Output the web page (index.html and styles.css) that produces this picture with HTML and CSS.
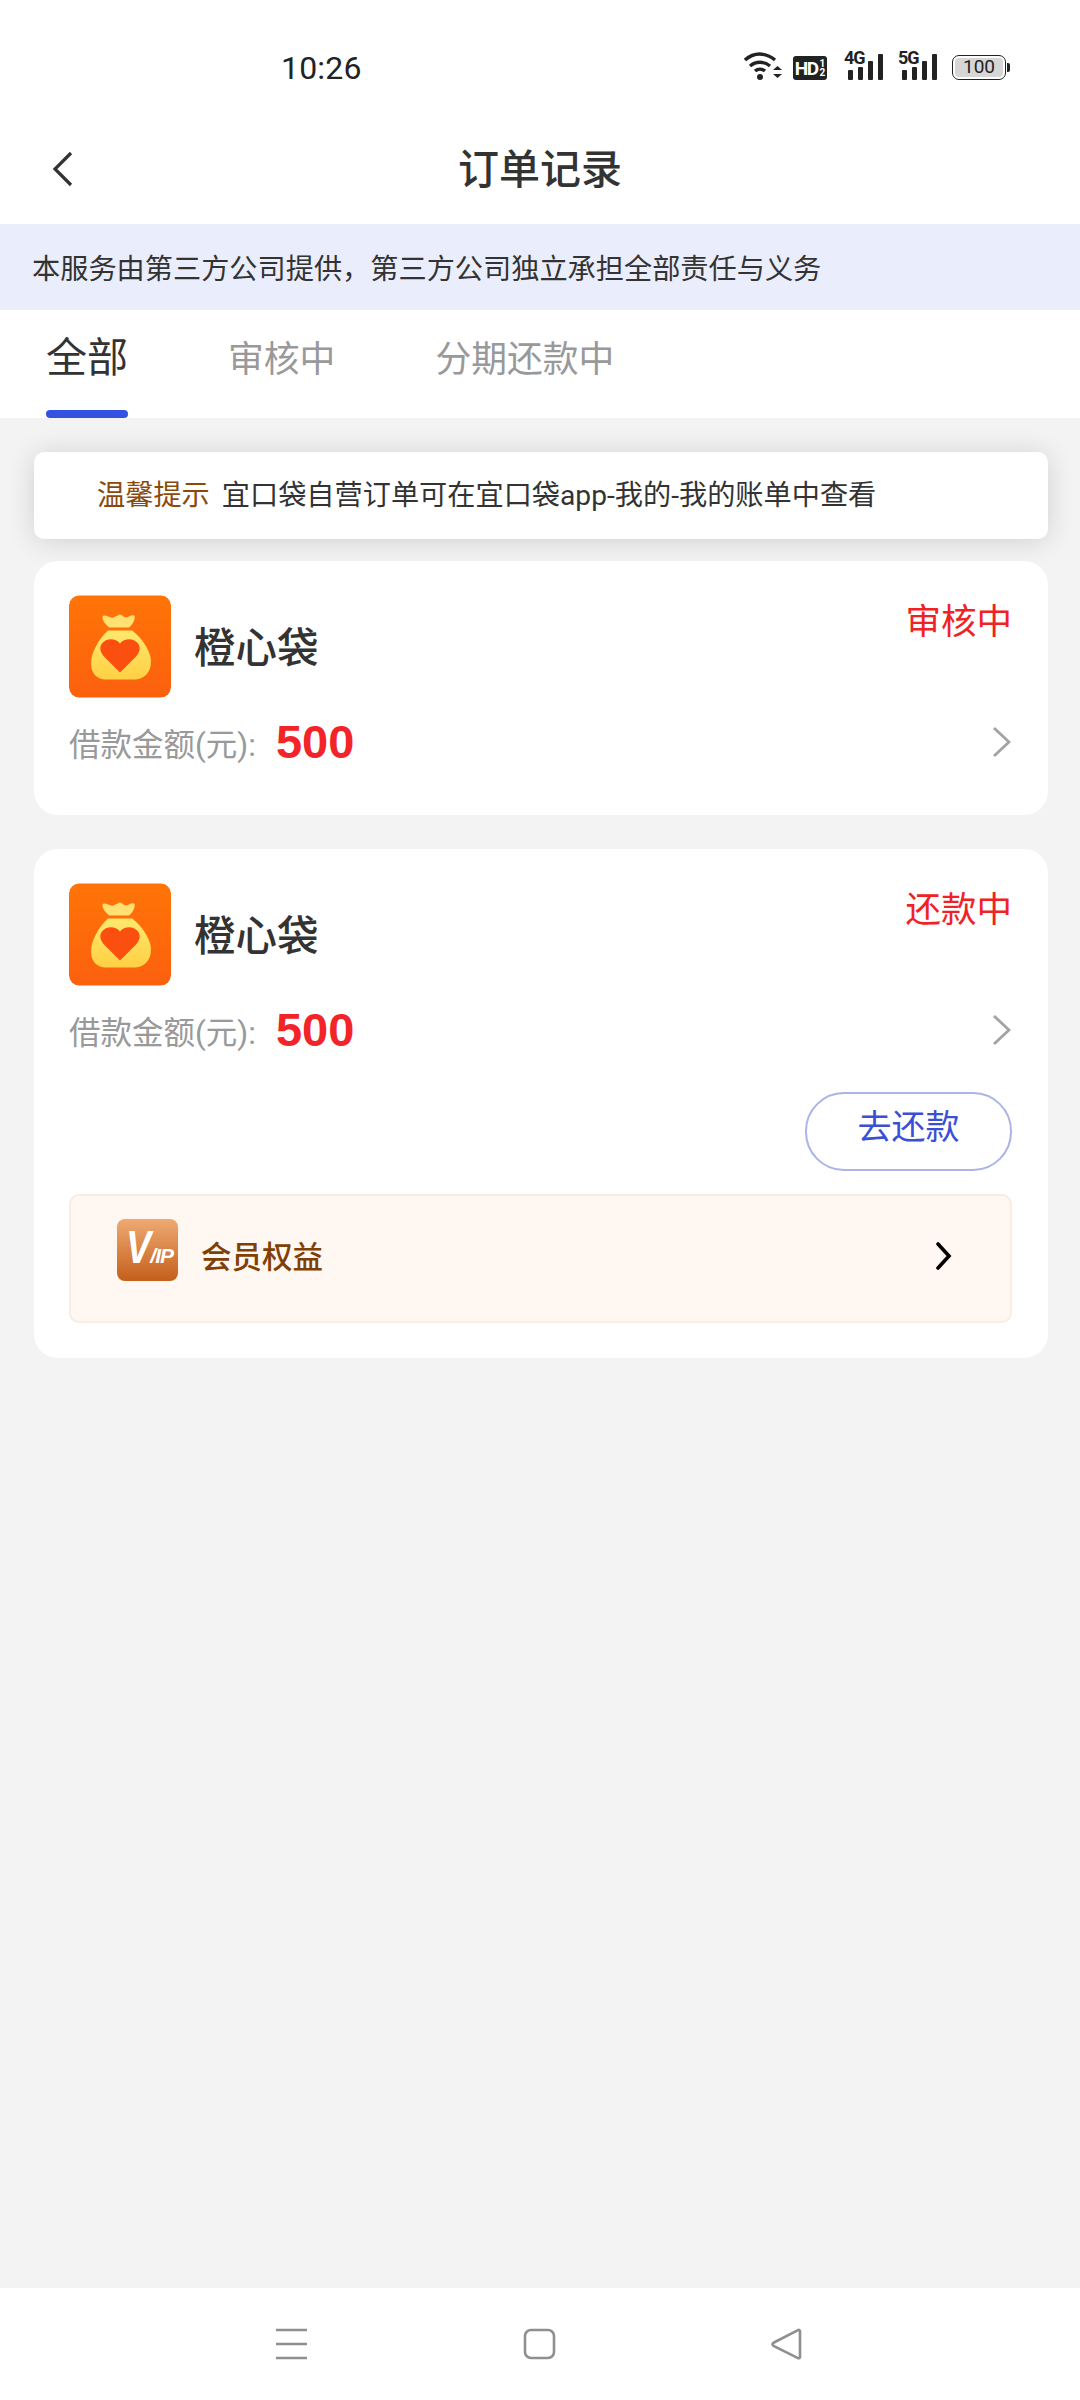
FILE: index.html
```html
<!DOCTYPE html>
<html>
<head>
    <title>订单记录</title>
    <meta charset="utf-8">
    <link rel="stylesheet" href="styles.css">
</head>
<body>
    <svg class="defs" width="0" height="0">
        <defs>
            <linearGradient id="bagBg" x1="0" y1="0" x2="0" y2="1">
                <stop offset="0" stop-color="#ff7407"/>
                <stop offset="1" stop-color="#fc600e"/>
            </linearGradient>
            <linearGradient id="bagBody" x1="0" y1="0" x2="0" y2="1">
                <stop offset="0" stop-color="#ffe86c"/>
                <stop offset="1" stop-color="#ffd044"/>
            </linearGradient>
            <symbol id="bag" viewBox="0 0 102 102">
                <rect width="102" height="102" rx="10" fill="url(#bagBg)"/>
                <path d="M35 20c4 0 6 3 9 2 4-1 5-3 7-3 3 0 3 3 6 3 3 0 5-3 8-2 2 1 0 6-2 9l-3 3H40l-3-3c-3-3-5-9-2-9z" fill="#ffe070"/>
                <path d="M39 35h24c10 7 19 21 19 31 0 11-7 18-17 18H37c-10 0-15-7-15-16 0-11 8-25 17-33z" fill="url(#bagBody)"/>
                <path d="M51 77 36 62c-5-5-6-10-3-14 4-5 13-6 18 0 5-6 14-5 18 0 3 4 2 9-3 14z" fill="#fb4f10"/>
            </symbol>
        </defs>
    </svg>

    <div class="status-bar">
        <span class="time">10:26</span>
        <div class="status-icons">
            <svg class="st-wifi" width="38" height="30" viewBox="0 0 38 30">
                <path d="M1 9c9-8 20-8 30 0M6 15c6-5 14-5 20 0M11 20c3-2.500 7-2.500 10 0" fill="none" stroke="#222" stroke-width="3.400"/>
                <circle cx="16" cy="26" r="3" fill="#222"/>
                <path d="M29 19l4.500-4 4.500 4zM29 23h9l-4.500 4z" fill="#222"/>
            </svg>
            <div class="st-hd">HD<span class="st-hd-sub">1<br>2</span></div>
            <div class="st-signal">
                <span class="st-net">4G</span>
                <i class="b1"></i><i class="b2"></i><i class="b3"></i><i class="b4"></i>
            </div>
            <div class="st-signal">
                <span class="st-net">5G</span>
                <i class="b1"></i><i class="b2"></i><i class="b3"></i><i class="b4"></i>
            </div>
            <div class="st-battery">
                <div class="st-battery-body"><span>100</span></div>
                <div class="st-battery-tip"></div>
            </div>
        </div>
    </div>

    <div class="header">
        <svg class="back" width="22" height="36" viewBox="0 0 22 36">
            <path d="M19 2 3 18l16 16" fill="none" stroke="#333" stroke-width="3.200"/>
        </svg>
        <h1>订单记录</h1>
    </div>

    <div class="banner">本服务由第三方公司提供，第三方公司独立承担全部责任与义务</div>

    <div class="tabs">
        <div class="tab tab-active">全部<span class="tab-bar"></span></div>
        <div class="tab">审核中</div>
        <div class="tab">分期还款中</div>
    </div>

    <div class="main">
        <div class="notice"><span class="notice-tag">温馨提示</span>宜口袋自营订单可在宜口袋app-我的-我的账单中查看</div>

        <div class="card">
            <div class="card-top">
                <svg class="app-icon"><use href="#bag"/></svg>
                <span class="app-name">橙心袋</span>
                <span class="state">审核中</span>
            </div>
            <div class="amount-row">
                <span class="amount-label">借款金额(元):</span>
                <span class="amount">500</span>
                <svg class="arrow" width="20" height="32" viewBox="0 0 20 32">
                    <path d="M2 2l15 14L2 30" fill="none" stroke="#a3a3a3" stroke-width="2.800"/>
                </svg>
            </div>
        </div>

        <div class="card">
            <div class="card-top">
                <svg class="app-icon"><use href="#bag"/></svg>
                <span class="app-name">橙心袋</span>
                <span class="state">还款中</span>
            </div>
            <div class="amount-row">
                <span class="amount-label">借款金额(元):</span>
                <span class="amount">500</span>
                <svg class="arrow" width="20" height="32" viewBox="0 0 20 32">
                    <path d="M2 2l15 14L2 30" fill="none" stroke="#a3a3a3" stroke-width="2.800"/>
                </svg>
            </div>
            <div class="actions">
                <div class="repay-btn">去还款</div>
            </div>
            <div class="vip-row">
                <div class="vip-icon"><span class="vip-v">V</span><span class="vip-ip">/IP</span></div>
                <span class="vip-text">会员权益</span>
                <svg class="vip-arrow" width="18" height="28" viewBox="0 0 18 28">
                    <path d="M3 2l11 12L3 26" fill="none" stroke="#000" stroke-width="3.600" stroke-linecap="round"/>
                </svg>
            </div>
        </div>
    </div>

    <div class="nav-bar">
        <svg width="33" height="32" viewBox="0 0 33 32">
            <path d="M1 2h31M1 16h31M1 30h31" stroke="#8f8f8f" stroke-width="2.600"/>
        </svg>
        <svg width="33" height="32" viewBox="0 0 33 32">
            <rect x="2" y="2" width="29" height="28" rx="6" fill="none" stroke="#8f8f8f" stroke-width="2.600"/>
        </svg>
        <svg width="33" height="32" viewBox="0 0 33 32">
            <path d="M30 3.500c0-1.500-1-2-2-1.400L4 14.500c-2 1-2 2.500 0 3.600l24 12c1 .5 2 0 2-1.400z" fill="none" stroke="#8f8f8f" stroke-width="2.600"/>
        </svg>
    </div>
</body>
</html>
```

FILE: styles.css
```css
* { box-sizing: border-box; }
body {
    margin: 0;
    width: 1080px;
    height: 2400px;
    display: flex;
    flex-direction: column;
    background: #fff;
    color: #333;
    font-family: Roboto, "Noto Sans CJK SC", sans-serif;
}
.defs { position: absolute; }

.status-bar {
    height: 116px;
    padding: 51px 70px 0 281px;
    display: flex;
    justify-content: space-between;
    align-items: flex-start;
}
.time { margin-top: 2px; font-size: 32px; line-height: 30px; color: #222; letter-spacing: 0.2px; }
.status-icons { display: flex; align-items: flex-end; height: 30px; }
.st-wifi { margin-right: 11px; }
.st-hd {
    width: 34px;
    height: 24px;
    margin-right: 17px;
    margin-bottom: 1px;
    display: flex;
    align-items: center;
    justify-content: center;
    background: #222;
    border-radius: 3px;
    color: #fff;
    font-size: 19px;
    font-weight: 700;
    letter-spacing: -1.5px;
}
.st-hd-sub { font-size: 10px; line-height: 9px; margin-left: 2px; letter-spacing: 0; }
.st-signal {
    position: relative;
    width: 40px;
    height: 28px;
    margin-right: 14px;
    margin-bottom: 1px;
    padding-left: 4px;
    display: flex;
    align-items: flex-end;
    gap: 5px;
}
.st-signal i { display: block; width: 5px; background: #222; border-radius: 1px; }
.st-signal .b1 { height: 10px; }
.st-signal .b2 { height: 13px; }
.st-signal .b3 { height: 19px; }
.st-signal .b4 { height: 26px; }
.st-net {
    position: absolute;
    left: 0;
    top: -3px;
    font-size: 18px;
    line-height: 18px;
    font-weight: 700;
    letter-spacing: -1px;
    color: #222;
}
.st-battery { display: flex; align-items: center; margin-bottom: 1px; }
.st-battery-body {
    width: 54px;
    height: 25px;
    padding: 2px;
    border: 1.5px solid #222;
    border-radius: 7px;
}
.st-battery-body span {
    display: block;
    height: 100%;
    background: #d6d6d6;
    border-radius: 4px;
    text-align: center;
    font-size: 19px;
    line-height: 18px;
    color: #222;
}
.st-battery-tip { width: 3px; height: 9px; margin-left: 1px; background: #222; border-radius: 0 2px 2px 0; }

.header {
    position: relative;
    height: 108px;
    display: flex;
    align-items: center;
    justify-content: center;
}
.header h1 { margin: 0; font-size: 41px; font-weight: 500; line-height: 108px; }
.back { position: absolute; left: 52px; top: 35px; }

.banner {
    height: 86px;
    padding-left: 32px;
    padding-top: 3px;
    background: #eaedfc;
    font-size: 28.2px;
    line-height: 86px;
}

.tabs {
    height: 108px;
    padding-left: 46px;
    display: flex;
    gap: 100px;
}
.tab {
    position: relative;
    padding-top: 22px;
    font-size: 35.8px;
    line-height: 56px;
    color: #999;
}
.tab-active { color: #333; font-size: 41px; width: 82px; padding-top: 20px; }
.tab-bar {
    position: absolute;
    left: 0;
    right: 0;
    bottom: 0;
    height: 8px;
    background: #3452e1;
    border-radius: 4px;
}

.main {
    flex: 1;
    padding: 34px 32px 0 34px;
    background: #f3f3f3;
    display: flex;
    flex-direction: column;
    gap: 34px;
}
.notice {
    height: 87px;
    margin-bottom: -12px;
    padding-left: 63px;
    background: #fff;
    border-radius: 10px;
    box-shadow: 0 2px 28px rgba(0, 0, 0, 0.14);
    font-size: 28.2px;
    line-height: 87px;
}
.notice-tag { color: #8a4a0c; margin-right: 12px; }

.card {
    padding: 34px 36px 35px 35px;
    background: #fff;
    border-radius: 24px;
}
.card-top { height: 103px; display: flex; align-items: center; }
.app-icon { width: 102px; height: 103px; border-radius: 10px; }
.app-name { margin-left: 23px; margin-bottom: 4px; font-size: 41.5px; font-weight: 500; }
.state {
    margin-left: auto;
    align-self: flex-start;
    margin-top: 5px;
    font-size: 35.5px;
    line-height: 44px;
    color: #f02225;
}
.amount-row {
    height: 54px;
    margin-top: 17px;
    margin-bottom: 11px;
    display: flex;
    align-items: center;
}
.amount-label { font-size: 31.5px; color: #999; }
.amount {
    margin-left: 20px;
    margin-bottom: 2px;
    font-family: "Liberation Sans", sans-serif;
    font-size: 47px;
    font-weight: 700;
    color: #f22429;
}
.arrow { margin-left: auto; }

.actions { margin-top: 35px; display: flex; justify-content: flex-end; }
.repay-btn {
    width: 207px;
    height: 79px;
    padding-top: 9px;
    border: 2px solid #aab4e6;
    border-radius: 39px;
    text-align: center;
    font-size: 34px;
    line-height: 48px;
    color: #3a4fd6;
}

.vip-row {
    height: 129px;
    margin-top: 23px;
    padding: 23px 57px 0 46px;
    display: flex;
    align-items: flex-start;
    background: #fff7f1;
    border: 2px solid #f9ece3;
    border-radius: 10px;
}
.vip-icon {
    width: 61px;
    height: 62px;
    display: flex;
    align-items: baseline;
    padding: 4px 0 0 9px;
    background: linear-gradient(#eeaa72, #c55f1b);
    border-radius: 8px;
    color: #fff;
    font-family: "Liberation Sans", sans-serif;
    font-style: italic;
    font-weight: 700;
}
.vip-v { display: block; font-size: 47px; line-height: 47px; transform: scaleX(0.8); transform-origin: left; }
.vip-ip { font-size: 21px; letter-spacing: -1px; margin-left: -7px; }
.vip-text {
    margin-left: 23px;
    margin-top: 17px;
    font-size: 30.5px;
    line-height: 44px;
    font-weight: 500;
    color: #7f3f05;
}
.vip-arrow { margin-left: auto; margin-top: 23px; }

.nav-bar {
    height: 112px;
    padding: 40px 277px 0 275px;
    display: flex;
    justify-content: space-between;
    align-items: flex-start;
    background: #fff;
}
```
